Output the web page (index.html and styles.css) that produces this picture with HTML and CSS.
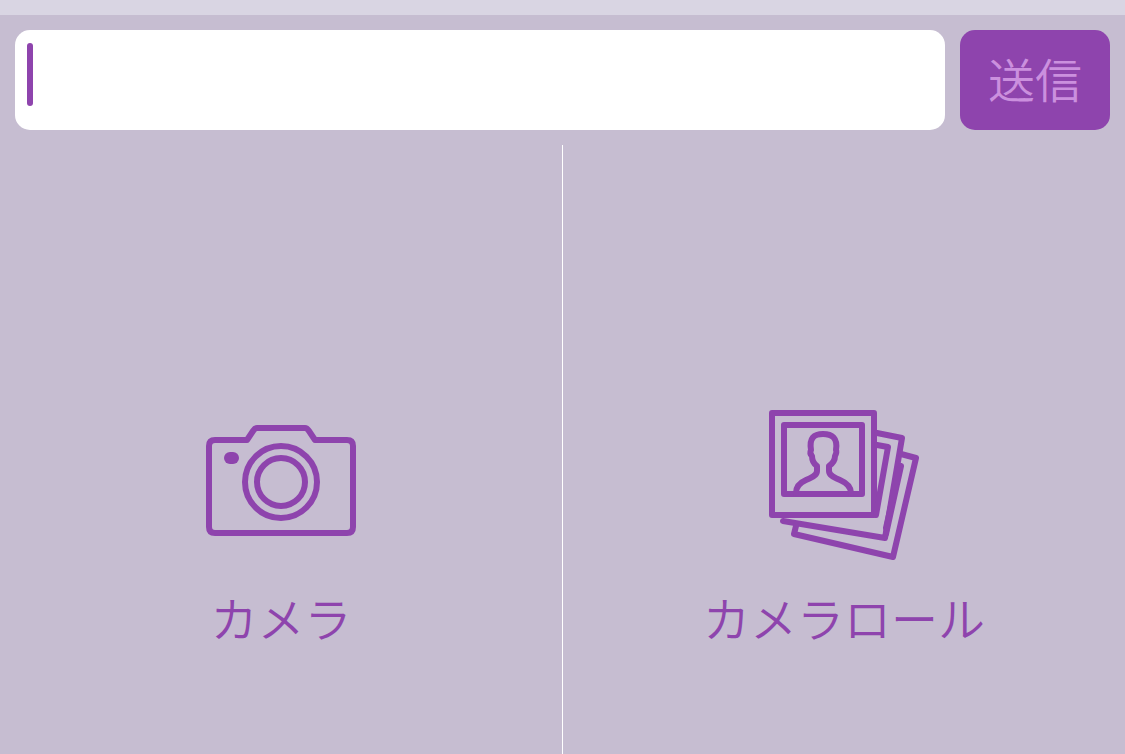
FILE: index.html
```
<!DOCTYPE html>
<html lang="ja">
<head>
    <meta charset="UTF-8">
    <meta name="viewport" content="width=device-width, initial-scale=1.0">
    <title>メッセージ</title>
    <link rel="stylesheet" href="styles.css">
</head>
<body>
    <form class="composer">
        <div class="field">
            <textarea class="message" aria-label="メッセージ"></textarea>
            <span class="caret"></span>
        </div>
        <button class="send" type="button">送信</button>
    </form>

    <div class="sources">
        <button class="source" type="button">
            <svg class="icon" viewBox="0 0 150 150" aria-hidden="true">
                <path d="M9 30H41L47 21Q49 18 51 18H99Q101 18 103 21L109 30H141Q147 30 147 36V117Q147 123 141 123H9Q3 123 3 117V36Q3 30 9 30Z"/>
                <circle cx="75" cy="72" r="36"/>
                <circle cx="75" cy="72" r="24"/>
                <rect class="solid" x="18" y="42" width="15" height="12" rx="6"/>
            </svg>
            <span>カメラ</span>
        </button>
        <button class="source" type="button">
            <svg class="icon" viewBox="0 0 150 150" aria-hidden="true">
                <rect x="3" y="3" width="102" height="102"/>
                <rect x="15" y="15" width="78" height="69"/>
                <path d="M27 83C27 77 30 73 37 70C44 67 48 65 48 61V56C45 54 43 50 43 46C41 44 41 42 42 40C40 28 45 24 54 24C63 24 69 28 67 40C68 42 67 44 66 46C66 50 63 54 60 56V61C60 65 64 67 71 70C78 73 82 77 82 83"/>
                <path d="M108 23L133 28L116 128L14 111"/>
                <path d="M108 35L119 37L107 105"/>
                <path d="M132 44L147 48L124 147L25 124L27 116"/>
                <path d="M132 56L117 124"/>
                <path d="M130 60L117 118"/>
            </svg>
            <span>カメラロール</span>
        </button>
    </div>
</body>
</html>
```
FILE: styles.css
```
* {
    box-sizing: border-box;
}
body {
    display: flex;
    flex-direction: column;
    min-height: 100vh;
    margin: 0;
    border-top: 15px solid #d9d5e3;
    background: #c6bdd1;
    color: #8e44ad;
    font-family: "Noto Sans CJK JP", sans-serif;
    font-weight: 350;
}
button,
textarea {
    border: none;
    color: inherit;
    font: inherit;
}
button {
    cursor: pointer;
}
.composer {
    display: flex;
    gap: 15px;
    padding: 15px;
}
.field {
    position: relative;
    flex: 1;
    height: 100px;
}
.message {
    display: block;
    width: 100%;
    height: 100%;
    padding: 12px;
    border-radius: 15px;
    outline: none;
    background: #fff;
    font-size: 48px;
    line-height: 64px;
    resize: none;
}
.caret {
    position: absolute;
    top: 13px;
    left: 12px;
    width: 6px;
    height: 63px;
    border-radius: 3px;
    background: #8e44ad;
}
.send {
    width: 150px;
    padding: 0 0 6px;
    border-radius: 15px;
    background: #8e44ad;
    color: #cb90de;
    font-size: 47px;
}
.sources {
    display: flex;
    flex: 1;
}
.source {
    display: flex;
    flex: 1;
    flex-direction: column;
    align-items: center;
    justify-content: flex-end;
    gap: 20px;
    padding: 0 0 100px;
    background: none;
    font-size: 47px;
    line-height: 74px;
}
.source + .source {
    border-left: 1px solid #fff;
}
.icon {
    width: 150px;
    height: 150px;
    fill: none;
    stroke: #8e44ad;
    stroke-width: 6;
    stroke-linejoin: round;
    stroke-linecap: round;
}
.icon .solid {
    fill: #8e44ad;
    stroke: none;
}
```
